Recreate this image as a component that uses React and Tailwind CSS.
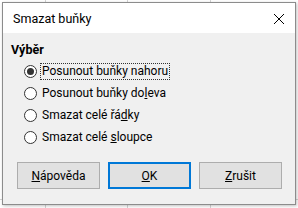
import React from "react";

const font = { fontFamily: 'Roboto, "Noto Sans", sans-serif' };

function Radio({ checked }) {
  return (
    <span className="w-[13px] h-[13px] rounded-full border border-[#333333] bg-white flex items-center justify-center shrink-0">
      {checked && <span className="w-[7px] h-[7px] rounded-full bg-[#333333]" />}
    </span>
  );
}

function Row({ checked, focused, children }) {
  return (
    <div className="flex items-center h-[22px] pl-[13px] gap-[3px]">
      <Radio checked={checked} />
      <span
        className={
          focused
            ? "border border-dotted border-[#333] px-[1px] leading-[14px] h-[17px] flex items-center"
            : "border border-transparent px-[1px] leading-[14px] h-[17px] flex items-center"
        }
      >
        {children}
      </span>
    </div>
  );
}

function Btn({ primary, children }) {
  return (
    <div
      className={
        primary
          ? "w-[83px] h-[27px] border-2 border-[#0078d7] bg-[#e1e1e1] flex items-center justify-center"
          : "w-[83px] h-[27px] border border-[#adadad] bg-[#e1e1e1] flex items-center justify-center"
      }
    >
      {children}
    </div>
  );
}

export default function App() {
  return (
    <div className="relative w-[298px] h-[208px] bg-white overflow-hidden text-[12px] text-black" style={font}>
      <div className="absolute left-[45px] top-0 bottom-0 w-px bg-[#d4d4d4]" />
      <div className="absolute left-[127px] top-0 bottom-0 w-px bg-[#d4d4d4]" />
      <div className="absolute left-[210px] top-0 bottom-0 w-px bg-[#d4d4d4]" />
      <div className="absolute left-0 right-0 top-[199px] h-px bg-[#d4d4d4]" />
      <div className="relative ml-[2px] mt-[2px] w-[294px] h-[203px] border border-[#8c8c8c] bg-[#f0f0f0] flex flex-col shadow-[1px_1px_3px_rgba(0,0,0,0.25)]">
        <div className="h-[30px] bg-white flex items-center justify-between pl-[10px] pr-[8px]">
          <span className="mt-[2px] text-[12.5px]">Smazat buňky</span>
          <svg width="12" height="12" viewBox="0 0 12 12" className="mr-[2px] mt-[2px]">
            <path d="M1 1 L11 11 M11 1 L1 11" stroke="#000" strokeWidth="1" />
          </svg>
        </div>
        <div className="flex flex-col pl-[8px] pt-[8px]">
          <div className="font-bold h-[18px] leading-[18px] text-[12.5px]">Výběr</div>
          <div className="flex flex-col mt-[1px]">
            <Row checked focused>Posunout buňky nahoru</Row>
            <Row>Posunout buňky do<u>l</u>eva</Row>
            <Row>Smazat celé řá<u>d</u>ky</Row>
            <Row><span>Smazat celé <u>s</u>loupce</span></Row>
          </div>
        </div>
        <div className="flex gap-[8px] pl-[14px] mt-[14px]">
          <Btn><span><u>N</u>ápověda</span></Btn>
          <Btn primary><span><u>O</u>K</span></Btn>
          <Btn><span><u>Z</u>rušit</span></Btn>
        </div>
      </div>
    </div>
  );
}
